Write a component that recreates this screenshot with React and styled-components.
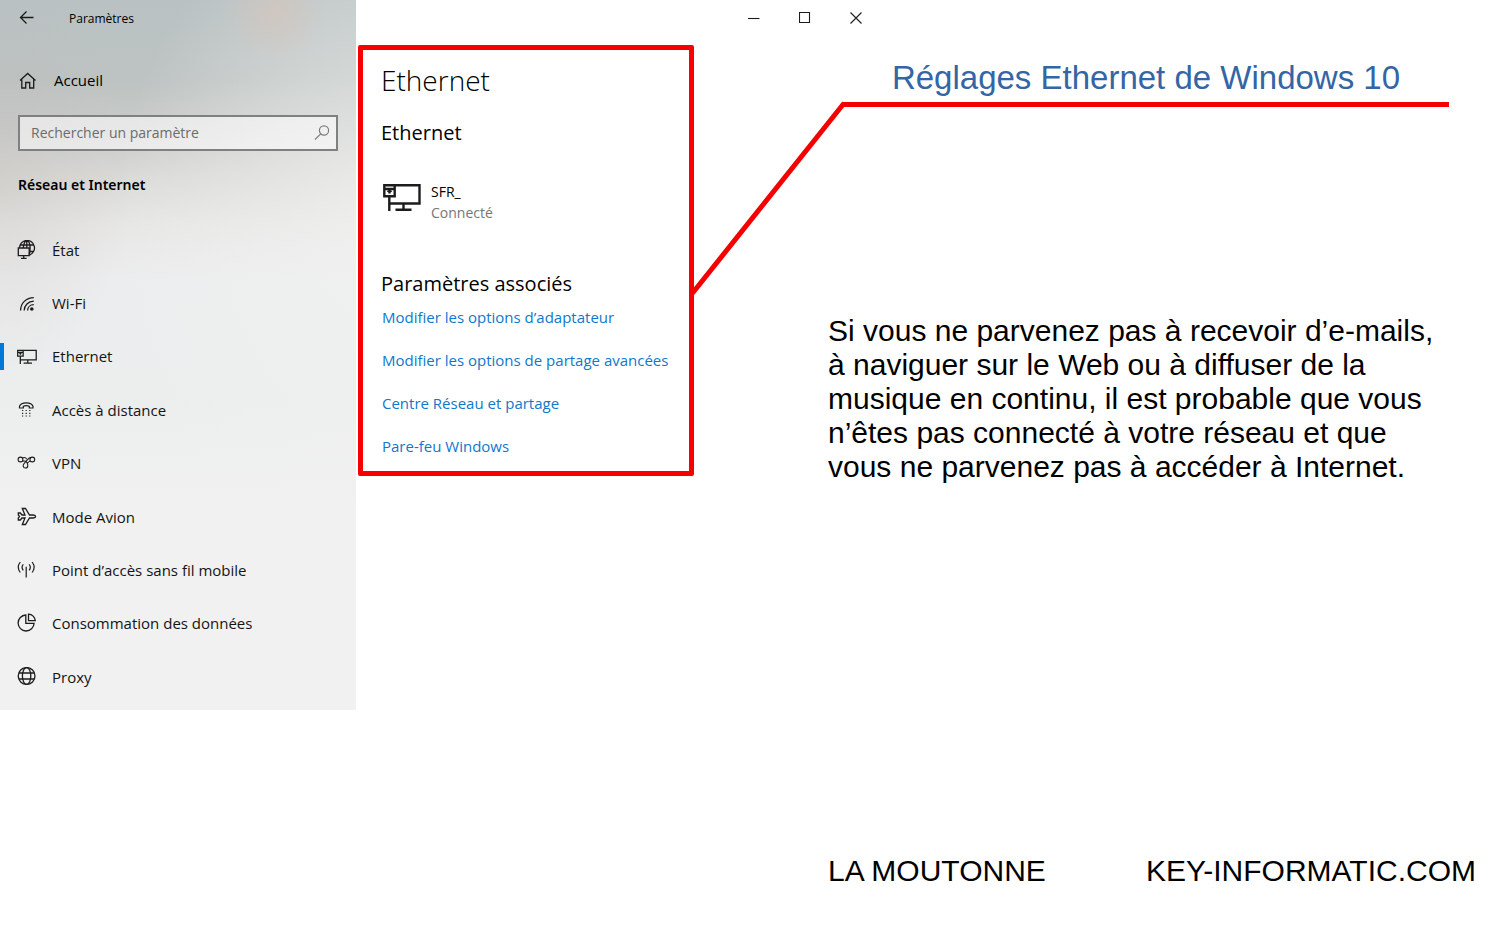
import React from "react";
import styled, { createGlobalStyle } from "styled-components";

const GlobalStyle = createGlobalStyle`
  * {
    box-sizing: border-box;
  }

  body {
    margin: 0;
    background: #fff;
    color: #000;
    font-family: "Open Sans", "Noto Sans", sans-serif;
    font-size: 15px;
  }

  h1, h2, h3, p, ul {
    margin: 0;
    padding: 0;
    font-weight: 400;
  }

  button {
    padding: 0;
    border: 0;
    background: none;
    color: inherit;
    font: inherit;
  }
`;

/* Icons */

const Icon = styled.svg`
  flex: none;
  width: ${props => props.$width || 20}px;
  height: ${props => props.$height || 20}px;
  fill: none;
  stroke: ${props => props.$color || "#1c1c1c"};
  stroke-width: ${props => props.$stroke || 1.3};
`;

const IconBack = () => (
  <Icon viewBox="0 0 20 20">
    <path d="M3.500 9.500H16.500M9.500 3.500l-6 6 6 6" />
  </Icon>
);

const IconHome = () => (
  <Icon viewBox="0 0 20 20">
    <path d="M3 10.500 10.700 3.500 18.500 10.500M4.800 9.500V18H8.700V12.500H12.700V18H16.700V9.500" />
  </Icon>
);

const IconSearch = () => (
  <Icon viewBox="0 0 20 20" $color="#7c7c7c" $stroke={1.2}>
    <circle cx="12" cy="8.500" r="4.600" />
    <path d="M8.700 11.900 3 17.500" />
  </Icon>
);

const IconStatus = () => (
  <Icon viewBox="0 0 20 20">
    <path d="M2.500 7.800a7.500 7.500 0 1 1 10 7.200M3.300 5h13.400M12.500 11.500h4.300M6.300 8C6.600 4 8 .8 9.800.8c2 0 3.300 3.400 3.300 7.200 0 2.500-.3 4.800-.9 6.500M9.800.8v7" />
    <path d="M1.300 8h10.900v7.700H1.300zM6.700 15.700v2.500M4 18.300h5.600" />
  </Icon>
);

const IconWifi = () => (
  <Icon viewBox="0 0 20 20">
    <path d="M3.600 17.500C3.600 10.300 9 4.700 16.800 4.700M7.200 17.500c0-5 4-9.300 9.600-9.300M10.600 17.500c0-3.300 2.500-5.800 6.200-5.800" />
    <circle cx="14.800" cy="16" r="1.800" fill="#1c1c1c" stroke="none" />
  </Icon>
);

const IconEthernet = ({ large }) => (
  <Icon
    viewBox="0 0 38 30"
    $width={large ? 38 : 20}
    $height={large ? 30 : 16}
    $stroke={2.400}
  >
    <path d="M12 4.200H36.500V22.500H6.500M20.500 22.500v6M12.500 28.700h16M6.300 15v15" />
    <path d="M1.300 4.200h10.400v11H1.300zM1.300 8h10.400M6.500 8v4.500" />
    <path d="M4.200 10.300h4.600" strokeWidth="1.500" />
  </Icon>
);

const IconDialup = () => (
  <Icon viewBox="0 0 20 20" $stroke={1.2}>
    <path d="M2.500 8V6.300C4 1.800 14.500 1.800 16 6.300V8h-3.700V6.300c-1.800-.8-4.200-.8-6 0V8z" />
    <path d="M5 10.500h1.200M8.600 10.500h1.200M12.200 10.500h1.200M5 13.300h1.200M8.600 13.300h1.200M12.200 13.300h1.200M5 16h1.200M8.600 16h1.200M12.200 16h1.200" />
  </Icon>
);

const IconVpn = () => (
  <Icon viewBox="0 0 20 20" $stroke={1.1}>
    <circle cx="3.500" cy="6.500" r="2.400" />
    <circle cx="15.300" cy="6.500" r="2.400" />
    <path d="M5.400 5c2-1 3.600-.2 4.400 1.200M5.500 8.200C7 8.500 8 7 9.500 9c1.800 2.400 2 6-1 6-2.600 0-3-2.800-1.300-4.700L12 5.200c.6-.5 1.200-.6 2-.6M13.300 8.200c-1.500 0-2.300 1.500-3.300 2.300" />
  </Icon>
);

const IconPlane = () => (
  <Icon viewBox="0 0 20 20">
    <path d="M1.300 6H3.300l1.700 2H8L5.300 1.500h3.200L12.500 8h3.700c3.200.5 3.200 2.500 0 3h-3.700l-4 6.500H5.300L8 11H5l-1.700 2H1.300V11L2.500 9.500 1.300 8z" />
  </Icon>
);

const IconHotspot = () => (
  <Icon viewBox="0 0 20 20" $stroke={1.2}>
    <path d="M9.200 6.800V17.500M6.300 4.300c-1.500 1.800-1.500 4.200 0 6M12.100 4.300c1.500 1.800 1.500 4.200 0 6M3.300 2c-2.500 3.200-2.500 7.300 0 10.500M15.100 2c2.500 3.200 2.500 7.300 0 10.500" />
  </Icon>
);

const IconData = () => (
  <Icon viewBox="0 0 20 20">
    <path d="M8.800 2a8 8 0 1 0 8.300 8.300H8.800z" />
    <path d="M11.500 1.200a7 7 0 0 1 6.800 6.500h-6.800z" />
  </Icon>
);

const IconGlobe = () => (
  <Icon viewBox="0 0 20 20">
    <circle cx="9.600" cy="9" r="8.400" />
    <ellipse cx="9.600" cy="9" rx="4.200" ry="8.400" />
    <path d="M2 6h15.200M2 12h15.200" />
  </Icon>
);

/* Settings navigation */

const Page = styled.div`
  display: grid;
  grid-template-columns: 356px 338px minmax(0, 1fr);
  align-items: start;
  min-height: 100vh;
`;

const Sidebar = styled.aside`
  display: flex;
  flex-direction: column;
  min-height: 75vh;
  padding-bottom: 6px;
  background:
    radial-gradient(circle at 275px 12px, rgba(215, 195, 185, 0.6), transparent 50px),
    radial-gradient(ellipse at 110% 32%, rgba(240, 242, 240, 0.8), transparent 50%),
    radial-gradient(ellipse at 0 26%, rgba(190, 184, 180, 0.3), transparent 26%),
    linear-gradient(
      #b9c1c2 0,
      #bdc3c2 80px,
      #c9cbca 130px,
      #d9d9d6 175px,
      #e7e7e5 225px,
      #ecedee 280px,
      #eceeee 400px,
      #f1f1f1 520px,
      #f1f1f1 100%
    );
`;

const SidebarBar = styled.header`
  display: flex;
  align-items: center;
  gap: 32px;
  height: 36px;
  padding-left: 17px;
  font-size: 12px;
`;

const BackButton = styled.button`
  display: flex;
`;

const HomeButton = styled.button`
  display: flex;
  align-items: center;
  gap: 17px;
  height: 36px;
  margin: 26px 17px 0;
`;

const SearchBox = styled.label`
  display: flex;
  align-items: center;
  height: 36px;
  margin: 17px 18px 0;
  padding: 0 4px 2px 11px;
  border: 2px solid #7f8080;
  background: rgba(255, 255, 255, 0.55);
`;

const SearchInput = styled.input`
  flex: 1;
  min-width: 0;
  padding: 0;
  border: 0;
  outline: 0;
  background: none;
  font: inherit;
  font-size: 14px;

  &::placeholder {
    color: #6c6c6c;
    opacity: 1;
  }
`;

const SectionTitle = styled.h2`
  margin: 24px 18px 0;
  font-family: "Noto Sans", sans-serif;
  font-size: 14px;
  font-weight: 600;
  line-height: 20px;
`;

const Nav = styled.nav`
  display: grid;
  flex: 1;
  grid-auto-rows: 1fr;
  margin-top: 28px;
`;

const NavLink = styled.a`
  display: flex;
  align-items: center;
  gap: 15px;
  padding-left: 17px;
  background: ${props =>
    props.$active
      ? "linear-gradient(#0078d7, #0078d7) left center / 4px 27px no-repeat"
      : "none"};
  color: #141414;
  text-decoration: none;
`;

/* Ethernet panel */

const Panel = styled.main`
  margin: 45px 0 0 2px;
  padding: 10px 12px 15px 18px;
  border: 5px solid #f80000;
  border-radius: 2px;
`;

const PanelTitle = styled.h1`
  font-size: 28px;
  font-weight: 350;
  line-height: 40px;
`;

const PanelHeading = styled.h2`
  margin-top: ${props => props.$space}px;
  font-size: 20px;
  line-height: 28px;
`;

const Connection = styled.div`
  display: flex;
  align-items: flex-start;
  gap: 10px;
  margin-top: 34px;
  padding-left: 2px;
  font-size: 14px;
  line-height: 21px;
`;

const Status = styled.div`
  color: #767676;
`;

const LinkList = styled.ul`
  display: grid;
  gap: 23px;
  margin-top: 9px;
  padding-left: 1px;
  list-style: none;
  line-height: 20px;
`;

const PanelLink = styled.a`
  color: #0f78cc;
  text-decoration: none;
  white-space: nowrap;
`;

/* Explanations */

const Slide = styled.section`
  position: relative;
  display: flex;
  flex-direction: column;
  min-height: 100vh;
  font-family: "Liberation Sans", Arial, sans-serif;
  font-size: 30px;
  line-height: 34px;
`;

const WindowButtons = styled.div`
  display: flex;
  height: 36px;
  padding-left: 34px;
`;

const WindowButton = styled.button`
  display: grid;
  place-items: center;
  width: 51px;
`;

const SlideTitle = styled.h2`
  margin: 22px 51px 0 149px;
  padding-bottom: 4px;
  border-bottom: 5px solid #f40000;
  color: #3465a4;
  font-size: 33px;
  line-height: 40px;
  text-align: center;
`;

const Connector = styled.svg`
  position: absolute;
  top: 100px;
  left: -4px;
  width: 156px;
  height: 196px;
  pointer-events: none;
`;

const Explanation = styled.p`
  margin: 207px 50px 0 134px;
`;

const Footer = styled.footer`
  display: flex;
  justify-content: space-between;
  margin-top: auto;
  padding: 0 24px 58px 134px;
`;

const navItems = [
  { label: "État", icon: <IconStatus /> },
  { label: "Wi-Fi", icon: <IconWifi /> },
  { label: "Ethernet", icon: <IconEthernet />, active: true },
  { label: "Accès à distance", icon: <IconDialup /> },
  { label: "VPN", icon: <IconVpn /> },
  { label: "Mode Avion", icon: <IconPlane /> },
  { label: "Point d’accès sans fil mobile", icon: <IconHotspot /> },
  { label: "Consommation des données", icon: <IconData /> },
  { label: "Proxy", icon: <IconGlobe /> }
];

const relatedLinks = [
  "Modifier les options d’adaptateur",
  "Modifier les options de partage avancées",
  "Centre Réseau et partage",
  "Pare-feu Windows"
];

const App = () => (
  <Page>
    <GlobalStyle />
    <Sidebar>
      <SidebarBar>
        <BackButton type="button" aria-label="Retour">
          <IconBack />
        </BackButton>
        Paramètres
      </SidebarBar>
      <HomeButton type="button">
        <IconHome />
        Accueil
      </HomeButton>
      <SearchBox>
        <SearchInput
          type="text"
          aria-label="Rechercher un paramètre"
          placeholder="Rechercher un paramètre"
        />
        <IconSearch />
      </SearchBox>
      <SectionTitle>Réseau et Internet</SectionTitle>
      <Nav>
        {navItems.map(({ label, icon, active }) => (
          <NavLink
            key={label}
            href="#"
            $active={active}
            aria-current={active ? "page" : undefined}
          >
            {icon}
            {label}
          </NavLink>
        ))}
      </Nav>
    </Sidebar>

    <Panel>
      <PanelTitle>Ethernet</PanelTitle>
      <PanelHeading $space={19}>Ethernet</PanelHeading>
      <Connection>
        <IconEthernet large />
        <div>
          <div>SFR_</div>
          <Status>Connecté</Status>
        </div>
      </Connection>
      <PanelHeading $space={47}>Paramètres associés</PanelHeading>
      <LinkList>
        {relatedLinks.map(label => (
          <li key={label}>
            <PanelLink href="#">{label}</PanelLink>
          </li>
        ))}
      </LinkList>
    </Panel>

    <Slide>
      <WindowButtons>
        <WindowButton type="button" aria-label="Réduire">
          <Icon viewBox="0 0 12 12" $width={12} $height={12} $stroke={1.1}>
            <path d="M0 6.500h11.500" />
          </Icon>
        </WindowButton>
        <WindowButton type="button" aria-label="Agrandir">
          <Icon viewBox="0 0 12 12" $width={12} $height={12} $stroke={1.1}>
            <path d="M.5.5h10v10H.5z" />
          </Icon>
        </WindowButton>
        <WindowButton type="button" aria-label="Fermer">
          <Icon viewBox="0 0 12 12" $width={12} $height={12} $stroke={1.1}>
            <path d="M.5.5l11 11M11.500.5l-11 11" />
          </Icon>
        </WindowButton>
      </WindowButtons>
      <SlideTitle>Réglages Ethernet de Windows 10</SlideTitle>
      <Connector viewBox="0 0 156 196" aria-hidden="true">
        <path
          d="M3 192.500 153 4.500"
          stroke="#f40000"
          strokeWidth="5"
          strokeLinecap="round"
        />
      </Connector>
      <Explanation>
        Si vous ne parvenez pas à recevoir d’e-mails, à naviguer sur le Web ou à
        diffuser de la musique en continu, il est probable que vous n’êtes pas
        connecté à votre réseau et que vous ne parvenez pas à accéder à
        Internet.
      </Explanation>
      <Footer>
        <span>LA MOUTONNE</span>
        <span>KEY-INFORMATIC.COM</span>
      </Footer>
    </Slide>
  </Page>
);

export default App;
